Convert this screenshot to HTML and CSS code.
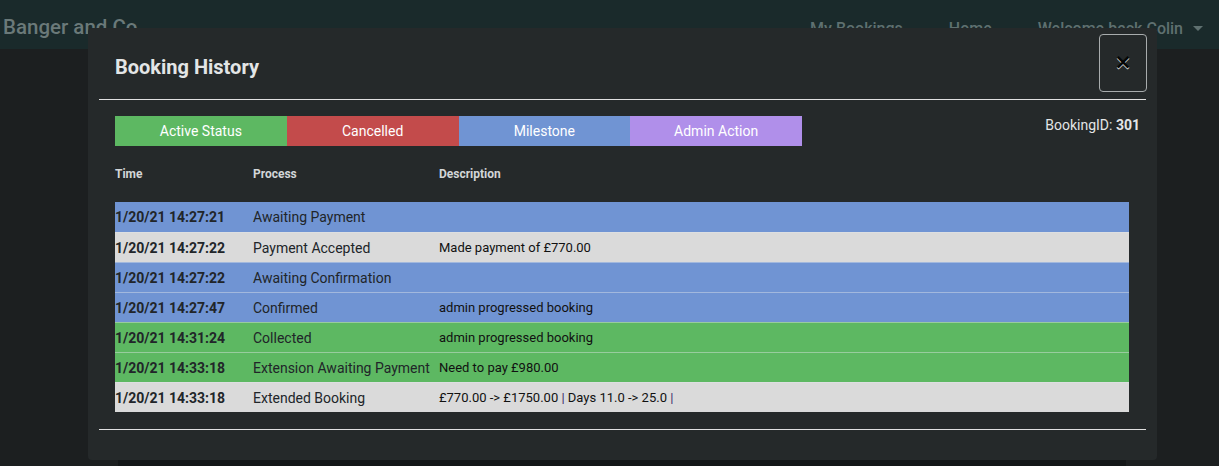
FILE: index.html
```html
<!DOCTYPE html>
<html>
<head>
<meta charset="utf-8">
<link rel="stylesheet" href="styles.css">
</head>
<body>
<nav class="navbar">
  <span class="brand">Banger and Co</span>
  <ul class="nav-links">
    <li>My Bookings</li>
    <li>Home</li>
    <li class="dropdown">Welcome back Colin <span class="caret"></span></li>
  </ul>
</nav>
<main class="page">
  <div class="card"></div>
</main>

<div class="modal">
  <div class="modal-header">
    <h2 class="modal-title">Booking History</h2>
    <button class="close-btn">×</button>
  </div>
  <div class="modal-body">
    <div class="top-row">
      <div class="legend">
        <span class="legend-item active">Active Status</span>
        <span class="legend-item cancelled">Cancelled</span>
        <span class="legend-item milestone">Milestone</span>
        <span class="legend-item admin">Admin Action</span>
      </div>
      <div class="booking-id">BookingID: <b>301</b></div>
    </div>
    <div class="history">
      <div class="row head">
        <span>Time</span><span>Process</span><span>Description</span>
      </div>
      <div class="row milestone">
        <span class="time">1/20/21 14:27:21</span><span class="proc">Awaiting Payment</span><span class="desc"></span>
      </div>
      <div class="row plain">
        <span class="time">1/20/21 14:27:22</span><span class="proc">Payment Accepted</span><span class="desc">Made payment of £770.00</span>
      </div>
      <div class="row milestone">
        <span class="time">1/20/21 14:27:22</span><span class="proc">Awaiting Confirmation</span><span class="desc"></span>
      </div>
      <div class="row milestone">
        <span class="time">1/20/21 14:27:47</span><span class="proc">Confirmed</span><span class="desc">admin progressed booking</span>
      </div>
      <div class="row active">
        <span class="time">1/20/21 14:31:24</span><span class="proc">Collected</span><span class="desc">admin progressed booking</span>
      </div>
      <div class="row active">
        <span class="time">1/20/21 14:33:18</span><span class="proc">Extension Awaiting Payment</span><span class="desc">Need to pay £980.00</span>
      </div>
      <div class="row plain">
        <span class="time">1/20/21 14:33:18</span><span class="proc">Extended Booking</span><span class="desc">£770.00 -&gt; £1750.00 <span class="pipe">|</span> Days 11.0 -&gt; 25.0 <span class="pipe">|</span></span>
      </div>
    </div>
  </div>
  <div class="modal-footer"></div>
</div>
</body>
</html>
```
FILE: styles.css
```css
* { box-sizing: border-box; }
html, body { margin: 0; padding: 0; overflow: hidden; }
body {
  background: #1c1f20;
  font-family: Roboto, "Liberation Sans", sans-serif;
  height: 466px;
}
.navbar {
  height: 49px;
  background: #1a2a2b;
  display: flex;
  align-items: center;
  justify-content: space-between;
  padding: 5px 0 0 3px;
}
.brand {
  color: #6a7979;
  font-size: 20.5px;
  font-weight: 500;
}
.nav-links {
  list-style: none;
  display: flex;
  margin: 0;
  padding: 2px 16px 0 0;
  color: #5f7070;
  font-size: 16px;
  font-weight: 500;
}
.nav-links li { margin-left: 46px; }
.caret {
  display: inline-block;
  width: 0; height: 0;
  margin-left: 6px;
  vertical-align: 3px;
  border-left: 5px solid transparent;
  border-right: 5px solid transparent;
  border-top: 5px solid #5f7070;
}
.page { padding: 406px 93px 0 118px; }
.card { height: 11px; background: #141718; }

.modal {
  position: absolute;
  left: 88px;
  top: 28px;
  width: 1069px;
  height: 432px;
  background: #25292a;
  border-radius: 4px;
  padding: 0 11px;
  display: flex;
  flex-direction: column;
}
.modal-header {
  height: 72px;
  border-bottom: 1px solid #e0e0e0;
  display: flex;
  align-items: flex-start;
  justify-content: space-between;
  padding-left: 16px;
}
.modal-title {
  margin: 27px 0 0;
  font-size: 20px;
  font-weight: 700;
  color: #e3e5e6;
  line-height: 24px;
}
.close-btn {
  margin-top: 6px;
  margin-right: -1px;
  width: 48px;
  height: 58px;
  background: transparent;
  border: 1px solid #bfc3c4;
  border-radius: 4px;
  font-family: "DejaVu Sans", sans-serif;
  font-size: 21px;
  font-weight: 700;
  line-height: 1;
  color: #000;
  text-shadow: 0 1px 0 #fff;
  opacity: .85;
  padding: 0 0 2px;
}
.modal-body {
  padding: 16px 6px 17px 16px;
  border-bottom: 1px solid #e0e0e0;
}
.top-row {
  display: flex;
  justify-content: space-between;
  align-items: flex-start;
}
.legend { display: flex; }
.legend-item {
  width: 171.75px;
  height: 30px;
  line-height: 30px;
  text-align: center;
  color: #fff;
  font-size: 14px;
}
.legend-item.active { background: #5db862; }
.legend-item.cancelled { background: #c34b4b; }
.legend-item.milestone { background: #7094d3; }
.legend-item.admin { background: #b08fea; }
.booking-id {
  color: #e3e5e6;
  font-size: 14px;
  line-height: 18px;
  padding-top: 0;
}
.booking-id b { font-weight: 700; }

.history { margin-right: 11px; }
.row {
  display: grid;
  grid-template-columns: 138px 186px 1fr;
  align-items: center;
  height: 30px;
  color: #212529;
  font-size: 14px;
  border-top: 1px solid rgba(225, 228, 232, 0.45);
}
.row.head {
  border-top: none;
  height: auto;
  margin: 20px 0 20px;
  color: #d3d6d8;
  font-size: 12px;
  font-weight: 700;
  line-height: 16px;
}
.row.milestone { background: #7094d3; }
.row.active { background: #5db862; }
.row.plain { background: #dadada; }
.history .row:nth-child(2) { border-top: none; }
.time { font-weight: 700; }
.desc { font-size: 13px; font-weight: 400; color: #111; }
.pipe { color: #3b2a6a; }
.modal-footer { height: 30px; }
```
